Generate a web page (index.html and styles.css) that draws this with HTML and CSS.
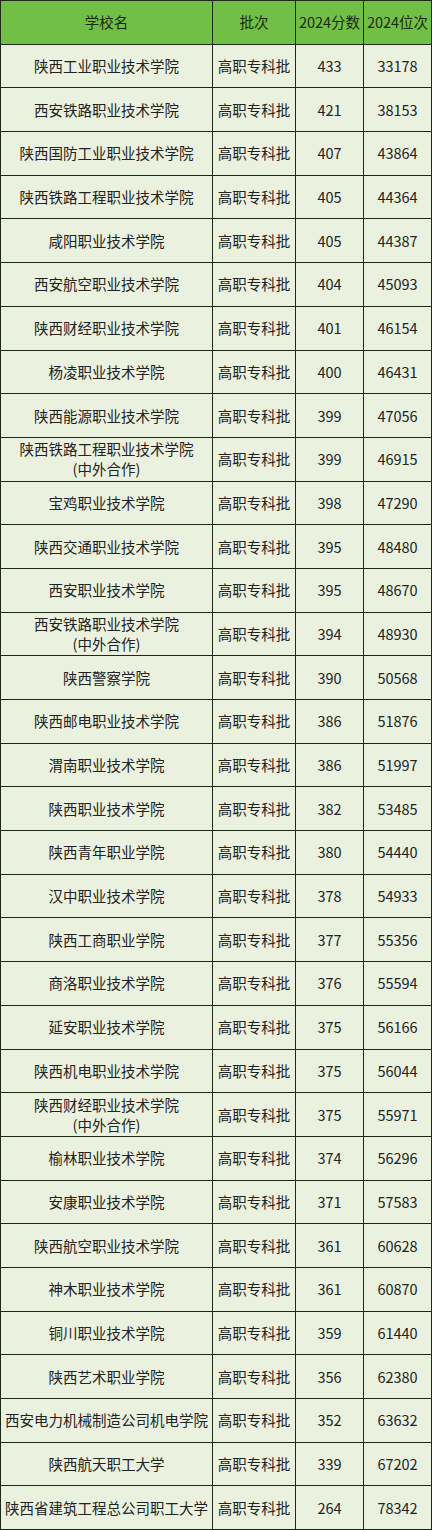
FILE: index.html
```html
<!DOCTYPE html>
<html lang="zh-CN">
<head>
<meta charset="utf-8">
<title>2024 陕西高职专科批</title>
<link rel="stylesheet" href="styles.css">
</head>
<body>
<table class="score-table">
  <colgroup>
    <col class="c-name">
    <col class="c-batch">
    <col class="c-score">
    <col class="c-rank">
  </colgroup>
  <thead>
    <tr><th>学校名</th><th>批次</th><th>2024分数</th><th>2024位次</th></tr>
  </thead>
  <tbody>
    <tr><td>陕西工业职业技术学院</td><td>高职专科批</td><td>433</td><td>33178</td></tr>
    <tr><td>西安铁路职业技术学院</td><td>高职专科批</td><td>421</td><td>38153</td></tr>
    <tr><td>陕西国防工业职业技术学院</td><td>高职专科批</td><td>407</td><td>43864</td></tr>
    <tr><td>陕西铁路工程职业技术学院</td><td>高职专科批</td><td>405</td><td>44364</td></tr>
    <tr><td>咸阳职业技术学院</td><td>高职专科批</td><td>405</td><td>44387</td></tr>
    <tr><td>西安航空职业技术学院</td><td>高职专科批</td><td>404</td><td>45093</td></tr>
    <tr><td>陕西财经职业技术学院</td><td>高职专科批</td><td>401</td><td>46154</td></tr>
    <tr><td>杨凌职业技术学院</td><td>高职专科批</td><td>400</td><td>46431</td></tr>
    <tr><td>陕西能源职业技术学院</td><td>高职专科批</td><td>399</td><td>47056</td></tr>
    <tr><td>陕西铁路工程职业技术学院<br>(中外合作)</td><td>高职专科批</td><td>399</td><td>46915</td></tr>
    <tr><td>宝鸡职业技术学院</td><td>高职专科批</td><td>398</td><td>47290</td></tr>
    <tr><td>陕西交通职业技术学院</td><td>高职专科批</td><td>395</td><td>48480</td></tr>
    <tr><td>西安职业技术学院</td><td>高职专科批</td><td>395</td><td>48670</td></tr>
    <tr><td>西安铁路职业技术学院<br>(中外合作)</td><td>高职专科批</td><td>394</td><td>48930</td></tr>
    <tr><td>陕西警察学院</td><td>高职专科批</td><td>390</td><td>50568</td></tr>
    <tr><td>陕西邮电职业技术学院</td><td>高职专科批</td><td>386</td><td>51876</td></tr>
    <tr><td>渭南职业技术学院</td><td>高职专科批</td><td>386</td><td>51997</td></tr>
    <tr><td>陕西职业技术学院</td><td>高职专科批</td><td>382</td><td>53485</td></tr>
    <tr><td>陕西青年职业学院</td><td>高职专科批</td><td>380</td><td>54440</td></tr>
    <tr><td>汉中职业技术学院</td><td>高职专科批</td><td>378</td><td>54933</td></tr>
    <tr><td>陕西工商职业学院</td><td>高职专科批</td><td>377</td><td>55356</td></tr>
    <tr><td>商洛职业技术学院</td><td>高职专科批</td><td>376</td><td>55594</td></tr>
    <tr><td>延安职业技术学院</td><td>高职专科批</td><td>375</td><td>56166</td></tr>
    <tr><td>陕西机电职业技术学院</td><td>高职专科批</td><td>375</td><td>56044</td></tr>
    <tr><td>陕西财经职业技术学院<br>(中外合作)</td><td>高职专科批</td><td>375</td><td>55971</td></tr>
    <tr><td>榆林职业技术学院</td><td>高职专科批</td><td>374</td><td>56296</td></tr>
    <tr><td>安康职业技术学院</td><td>高职专科批</td><td>371</td><td>57583</td></tr>
    <tr><td>陕西航空职业技术学院</td><td>高职专科批</td><td>361</td><td>60628</td></tr>
    <tr><td>神木职业技术学院</td><td>高职专科批</td><td>361</td><td>60870</td></tr>
    <tr><td>铜川职业技术学院</td><td>高职专科批</td><td>359</td><td>61440</td></tr>
    <tr><td>陕西艺术职业学院</td><td>高职专科批</td><td>356</td><td>62380</td></tr>
    <tr><td>西安电力机械制造公司机电学院</td><td>高职专科批</td><td>352</td><td>63632</td></tr>
    <tr><td>陕西航天职工大学</td><td>高职专科批</td><td>339</td><td>67202</td></tr>
    <tr><td>陕西省建筑工程总公司职工大学</td><td>高职专科批</td><td>264</td><td>78342</td></tr>
  </tbody>
</table>
</body>
</html>
```

FILE: styles.css
```css
html, body {
  margin: 0;
  padding: 0;
  background: #ffffff;
}

.score-table {
  width: 431px;
  height: 1530px;
  border-collapse: collapse;
  table-layout: fixed;
  font-family: "Noto Sans CJK SC", "Noto Sans", sans-serif;
  font-size: 14.5px;
  color: #222222;
}

.c-name { width: 212px; }
.c-batch { width: 83px; }
.c-score { width: 68px; }
.c-rank { width: 68px; }

.score-table th,
.score-table td {
  border: 1px solid #1e2a18;
  text-align: center;
  vertical-align: middle;
  padding: 0;
  line-height: 20px;
  font-weight: 400;
  white-space: nowrap;
}

.score-table thead th {
  background: #71bf46;
  color: #1c2a14;
}

.score-table tbody td {
  background: #ebf1df;
}

.score-table tr {
  height: 43.7px;
}
```
